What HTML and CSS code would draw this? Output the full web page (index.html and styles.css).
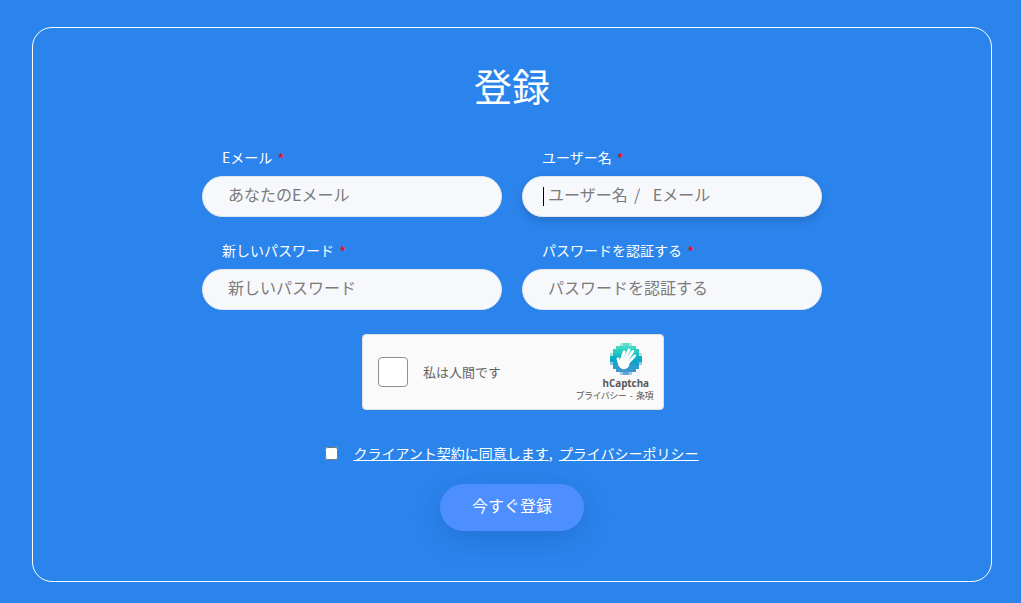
FILE: index.html
```html
<!DOCTYPE html>
<html lang="ja">
<head>
    <meta charset="UTF-8">
    <meta name="viewport" content="width=device-width, initial-scale=1.0">
    <title>登録</title>
    <link rel="stylesheet" href="styles.css">
</head>
<body>
    <div class="container">
        <h1>登録</h1>
        <form class="register-form">
            <div class="fields">
                <div class="field">
                    <label>Eメール <span class="required">*</span></label>
                    <input type="text" placeholder="あなたのEメール">
                </div>
                <div class="field">
                    <label>ユーザー名 <span class="required">*</span></label>
                    <div class="input-fake focused"><span class="caret"></span>ユーザー名 /&nbsp;&nbsp;Eメール</div>
                </div>
                <div class="field">
                    <label>新しいパスワード <span class="required">*</span></label>
                    <input type="text" placeholder="新しいパスワード">
                </div>
                <div class="field">
                    <label>パスワードを認証する <span class="required">*</span></label>
                    <input type="text" placeholder="パスワードを認証する">
                </div>
            </div>

            <div class="captcha">
                <div class="captcha-box"></div>
                <div class="captcha-text">私は人間です</div>
                <div class="captcha-brand">
                    <svg class="captcha-logo" viewBox="0 0 10 10" width="32" height="32">
                        <!-- pixel octagon, one rect per row -->
                        <g shape-rendering="crispEdges">
                            <rect x="3" y="0" width="4" height="1" fill="#5fdccb"/>
                            <rect x="2" y="1" width="6" height="1" fill="#40d8c6"/>
                            <rect x="1" y="2" width="8" height="1" fill="#2acdbf"/>
                            <rect x="0" y="3" width="10" height="1" fill="#1cc0c0"/>
                            <rect x="0" y="4" width="10" height="1" fill="#10b0c4"/>
                            <rect x="0" y="5" width="10" height="1" fill="#0ca6c8"/>
                            <rect x="0" y="6" width="10" height="1" fill="#1a9fcb"/>
                            <rect x="1" y="7" width="8" height="1" fill="#2f9bcc"/>
                            <rect x="2" y="8" width="6" height="1" fill="#3f97cc"/>
                            <rect x="3" y="9" width="4" height="1" fill="#5aa6d4"/>
                            <rect x="3" y="0" width="1" height="1" fill="#a8ece0"/>
                            <rect x="6" y="0" width="1" height="1" fill="#a8ece0"/>
                            <rect x="0" y="3" width="1" height="1" fill="#a8e6e2"/>
                            <rect x="9" y="3" width="1" height="1" fill="#a8e6e2"/>
                            <rect x="0" y="6" width="1" height="1" fill="#8cc8e0"/>
                            <rect x="9" y="6" width="1" height="1" fill="#8cc8e0"/>
                            <rect x="3" y="9" width="1" height="1" fill="#a0cce6"/>
                            <rect x="6" y="9" width="1" height="1" fill="#a0cce6"/>
                        </g>
                        <g transform="translate(-0.72 -0.8) scale(1.15)">
                            <g class="hand">
                                <line x1="3.7" y1="5.4" x2="4.5" y2="3.1"/>
                                <line x1="4.4" y1="5.4" x2="5.8" y2="2.6"/>
                                <line x1="5" y1="5.6" x2="6.8" y2="3"/>
                                <line x1="5.4" y1="6.2" x2="7.3" y2="4.2"/>
                                <line x1="3.3" y1="6.6" x2="2.8" y2="5"/>
                            </g>
                            <circle cx="4.4" cy="6.3" r="1.5" fill="#ffffff"/>
                        </g>
                    </svg>
                    <div class="captcha-name">hCaptcha</div>
                    <div class="captcha-links">プライバシー - 条項</div>
                </div>
            </div>

            <div class="agree">
                <input type="checkbox" class="agree-check">
                <span><a href="#">クライアント契約に同意します</a>, <a href="#" class="agree-second">プライバシーポリシー</a></span>
            </div>

            <button type="button" class="submit-btn">今すぐ登録</button>
        </form>
    </div>
</body>
</html>
```

FILE: styles.css
```css
* {
    box-sizing: border-box;
}
body {
    font-family: "Noto Sans CJK JP", "Noto Sans", sans-serif;
    background-color: #2b84ec;
    color: #ffffff;
    margin: 0;
    padding: 27px 29px 21px 32px;
}
.container {
    height: 555px;
    border: 1px solid #ffffff;
    border-radius: 20px;
    padding-top: 31px;
}
h1 {
    font-size: 38px;
    font-weight: 400;
    line-height: 52px;
    text-align: center;
    margin: 0 0 36px;
}
.register-form {
    display: flex;
    flex-direction: column;
    align-items: center;
}
.fields {
    display: grid;
    grid-template-columns: 300px 300px;
    column-gap: 20px;
    row-gap: 23px;
}
.field label {
    display: block;
    font-size: 14px;
    line-height: 20px;
    padding-left: 20px;
    margin-bottom: 9px;
}
.required {
    color: #ff0000;
    margin-left: 2px;
    font-size: 15px;
    line-height: 1;
    vertical-align: -2px;
}
.field input,
.input-fake {
    display: block;
    width: 100%;
    height: 41px;
    border: 1px solid #e3e7ee;
    border-radius: 21px;
    background-color: #f6f8fb;
    padding: 0 25px;
    font-family: inherit;
    font-size: 16px;
    color: #7b7b7b;
    outline: none;
}
.field input {
    padding-bottom: 5px;
}
.field input::placeholder {
    color: #7b7b7b;
    opacity: 1;
}
.input-fake {
    position: relative;
    line-height: 35px;
    word-spacing: 2.7px;
}
.input-fake.focused {
    box-shadow: 0 4px 8px rgba(0, 0, 0, 0.15);
}
.caret {
    position: absolute;
    left: 20px;
    top: 10px;
    width: 1px;
    height: 19px;
    background-color: #000000;
}
.captcha {
    display: flex;
    align-items: center;
    width: 302px;
    height: 76px;
    margin-top: 24px;
    margin-left: 2px;
    background-color: #fafafa;
    border: 1px solid #e0e0e0;
    border-radius: 4px;
    color: #555555;
    padding: 0 15px;
}
.captcha-box {
    width: 30px;
    height: 30px;
    background-color: #ffffff;
    border: 1px solid #8f8f8f;
    border-radius: 4px;
}
.captcha-text {
    font-size: 13px;
    margin-left: 15px;
    margin-bottom: 2px;
    color: #666666;
}
.captcha-brand {
    margin-left: auto;
    margin-right: -5px;
    display: flex;
    flex-direction: column;
    align-items: flex-end;
}
.captcha-logo {
    display: block;
    margin-top: 1px;
    margin-right: 11px;
}
.hand line {
    stroke: #ffffff;
    stroke-width: 0.8;
    stroke-linecap: round;
}
.captcha-name {
    font-family: "Open Sans", sans-serif;
    font-size: 9.8px;
    font-weight: 700;
    line-height: 13px;
    margin-top: 2px;
    margin-right: 4px;
    color: #555555;
    white-space: nowrap;
}
.captcha-links {
    font-size: 9px;
    line-height: 12px;
    letter-spacing: -0.5px;
    word-spacing: 2px;
    color: #555555;
    white-space: nowrap;
}
.agree {
    display: flex;
    align-items: center;
    margin-top: 33px;
    font-size: 14px;
    line-height: 20px;
}
.agree a {
    color: #ffffff;
}
.agree-second {
    margin-left: 3px;
}
.agree-check {
    width: 13px;
    height: 13px;
    margin: 0 15px 0 0;
}
.submit-btn {
    width: 144px;
    height: 47px;
    margin-top: 21px;
    padding-bottom: 6px;
    border: none;
    border-radius: 24px;
    background-color: #4d8fff;
    color: #ffffff;
    font-family: inherit;
    font-size: 16px;
    box-shadow: 0 8px 28px rgba(20, 70, 150, 0.28);
}
```
